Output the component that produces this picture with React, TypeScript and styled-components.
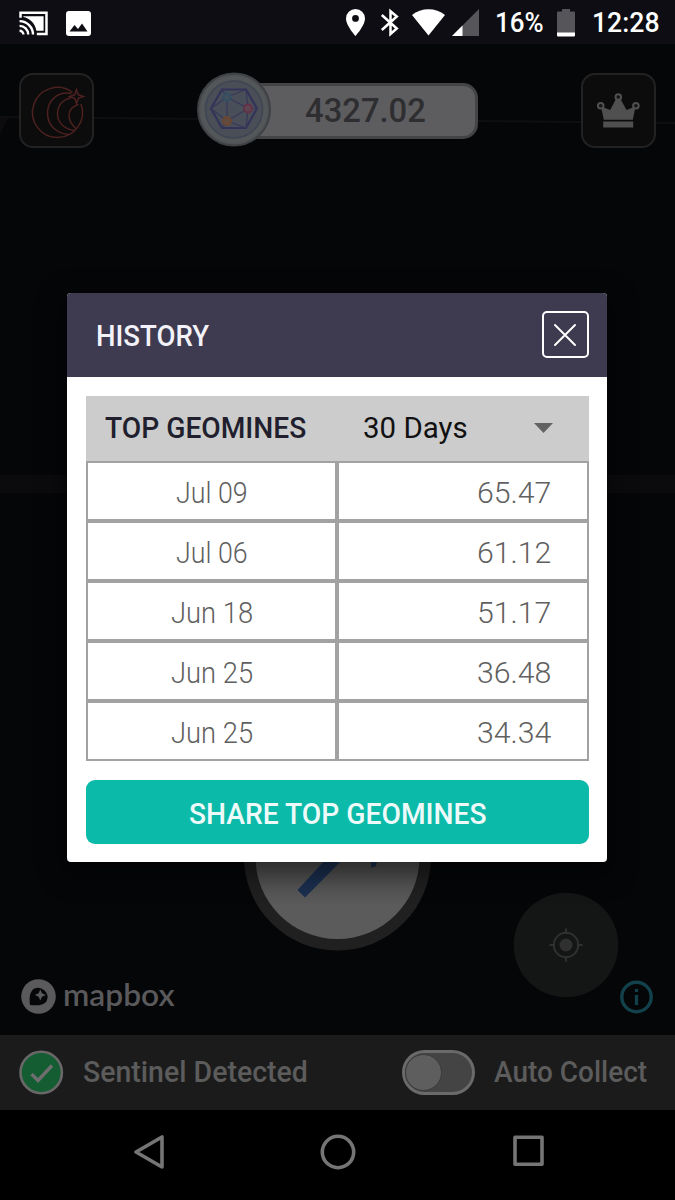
import React, { useLayoutEffect, useRef, useState } from "react";
import styled, { createGlobalStyle } from "styled-components";

const GlobalStyle = createGlobalStyle`
  * { box-sizing: border-box; }
  body { margin: 0; background: #000; font-family: Roboto, "Liberation Sans", sans-serif; }
  svg { display: block; flex: none; overflow: visible; }
`;

const Screen = styled.div`
  position: relative;
  width: 675px;
  height: 1200px;
  display: flex;
  flex-direction: column;
  overflow: hidden;
`;

/* ---------- text that is condensed to a set width ---------- */

const FitBox = styled.span<{ $width: number; $size: number; $weight: number; $color: string; $family?: string }>`
  display: block;
  flex: none;
  width: ${(p) => p.$width}px;
  font-family: ${(p) => p.$family ?? "Roboto"}, "Liberation Sans", sans-serif;
  font-size: ${(p) => p.$size}px;
  font-weight: ${(p) => p.$weight};
  line-height: 40px;
  height: 40px;
  color: ${(p) => p.$color};
  white-space: nowrap;
`;

const FitInner = styled.span`
  display: inline-block;
  transform-origin: left center;
`;

type LabelProps = {
  width: number;
  size: number;
  weight?: number;
  color: string;
  family?: string;
  children: string;
};

function Label({ width, size, weight = 400, color, family, children }: LabelProps) {
  const ref = useRef<HTMLSpanElement>(null);
  const [scale, setScale] = useState(1);
  useLayoutEffect(() => {
    if (ref.current) setScale(width / ref.current.offsetWidth);
  }, [width, children]);
  return (
    <FitBox $width={width} $size={size} $weight={weight} $color={color} $family={family}>
      <FitInner ref={ref} style={{ transform: `scaleX(${scale})` }}>
        {children}
      </FitInner>
    </FitBox>
  );
}

/* ---------- status bar ---------- */

const StatusBar = styled.header`
  height: 44px;
  flex: none;
  display: flex;
  justify-content: space-between;
  align-items: center;
  padding: 2px 15px 0 18px;
  background: #0d0d13;
`;

const StatusGroup = styled.div<{ $gap: number }>`
  display: flex;
  align-items: center;
  gap: ${(p) => p.$gap}px;
`;

const StatusIcons = styled.div`
  display: flex;
  align-items: center;
  margin: -2px -1px 0 0;
`;

/* ---------- map ---------- */

const MapArea = styled.main`
  position: relative;
  flex: 1;
  display: flex;
  flex-direction: column;
  justify-content: space-between;
  background: #050608;
`;

const MapDrawing = styled.svg`
  position: absolute;
  left: 0;
  top: 0;
`;

const TopControls = styled.div`
  position: relative;
  display: flex;
  justify-content: space-between;
  padding: 29px 19px 0 19px;
`;

const SquareButton = styled.button`
  width: 75px;
  height: 75px;
  padding: 0;
  display: flex;
  align-items: center;
  justify-content: center;
  border: 2px solid #222;
  border-radius: 14px;
  background: #0c0c0c;
`;

const Balance = styled.div`
  width: 281px;
  height: 75px;
  display: flex;
  align-items: center;
`;

const BalancePill = styled.div`
  width: 244px;
  height: 56px;
  margin: 0 0 0 -37px;
  padding: 1px 0 0 67px;
  display: flex;
  align-items: center;
  border: 3px solid #444446;
  border-radius: 15px;
  background: #5d5d60;
`;

const Coin = styled.svg`
  position: relative;
  z-index: 1;
`;

const MapFooter = styled.div`
  position: relative;
  display: flex;
  justify-content: space-between;
  align-items: center;
  padding: 0 22px 21px 21px;
`;

const Brand = styled.div`
  display: flex;
  align-items: center;
  gap: 7px;
`;

const BrandText = styled.div`
  margin-top: -6px;
`;

/* ---------- bottom bars ---------- */

const SentinelBar = styled.section`
  height: 75px;
  flex: none;
  display: flex;
  align-items: center;
  justify-content: space-between;
  padding: 0 28px 0 19px;
  background: #1b1b1b;
`;

const Item = styled.div`
  display: flex;
  align-items: center;
  gap: 19px;
`;

const ItemText = styled.div`
  margin-top: -2px;
`;

const Toggle = styled.div`
  width: 73px;
  height: 45px;
  padding: 1px 0;
  border: 3px solid #6a6a6a;
  border-radius: 23px;
  background: #444;
`;

const Knob = styled.div`
  width: 37px;
  height: 37px;
  border-radius: 50%;
  border: 1px solid #3a3a3a;
  background: #5e5e5e;
`;

const NavBar = styled.nav`
  height: 90px;
  flex: none;
  display: flex;
  align-items: center;
  justify-content: space-between;
  padding: 0 131px 6px 133px;
  background: #000;
`;

/* ---------- dialog ---------- */

const Dialog = styled.section`
  position: absolute;
  left: 67.4px;
  top: 292.5px;
  width: 540px;
  height: 569.9px;
  border-radius: 4px;
  overflow: hidden;
  background: #fff;
  box-shadow: 0 8px 26px 6px rgba(0, 0, 0, 0.45);
`;

const DialogHeader = styled.div`
  height: 84.5px;
  display: flex;
  align-items: center;
  justify-content: space-between;
  padding: 0 18.5px 0 29px;
  background: #3e3a50;
`;

const DialogTitle = styled.div`
  padding-top: 2px;
`;

const CloseButton = styled.button`
  width: 47px;
  height: 47px;
  padding: 0;
  display: flex;
  align-items: center;
  justify-content: center;
  border: 2px solid #fff;
  border-radius: 5px;
  background: transparent;
`;

const DialogBody = styled.div`
  padding: 19px 18.5px 18px 18.5px;
`;

const TableHeader = styled.div`
  height: 65px;
  display: flex;
  align-items: center;
  padding: 0 36px 1px 19px;
  background: #ccc;
`;

const PeriodSelect = styled.div`
  flex: 1;
  display: flex;
  align-items: center;
  justify-content: space-between;
  margin-left: 57px;
`;

const Row = styled.div`
  height: 60px;
  display: grid;
  grid-template-columns: 1fr 1fr;
`;

const Cell = styled.div<{ $end?: boolean }>`
  display: flex;
  align-items: center;
  justify-content: ${(p) => (p.$end ? "flex-end" : "center")};
  padding-right: ${(p) => (p.$end ? 36 : 0)}px;
  padding-top: 4px;
  border: 2px solid #a2a2a2;
`;

const ShareButton = styled.button`
  width: 100%;
  height: 64px;
  margin-top: 19px;
  padding: 3px 0 0 1px;
  display: flex;
  align-items: center;
  justify-content: center;
  border: 0;
  border-radius: 9px;
  background: #0bbaa8;
`;

const rows = [
  { date: "Jul 09", width: 72, amount: "65.47" },
  { date: "Jul 06", width: 72, amount: "61.12" },
  { date: "Jun 18", width: 82, amount: "51.17" },
  { date: "Jun 25", width: 82, amount: "36.48" },
  { date: "Jun 25", width: 82, amount: "34.34" },
];

export default function App() {
  return (
    <Screen>
      <GlobalStyle />
      <StatusBar>
        <StatusGroup $gap={17}>
          <svg width="31" height="25" viewBox="0 0 31 26" fill="none" stroke="#fff">
            <path d="M2 7V1.8H29V24H19" strokeWidth="2.6" />
            <path d="M5 5.5H26V20.5H18.5C17 12 11 7.5 5 6.3Z" fill="#fff" stroke="none" />
            <path d="M1 20.5A4 4 0 0 1 5 24.5M1 15.5A9 9 0 0 1 10 24.5M1 10.5A14 14 0 0 1 15 24.5" strokeWidth="2.5" />
          </svg>
          <svg width="25" height="25" viewBox="0 0 25 25">
            <rect width="25" height="25" rx="3" fill="#fff" />
            <path d="M3.5 20.5L8.5 14L12 18L16 12.5L21.5 20.5Z" fill="#0d0d13" />
          </svg>
        </StatusGroup>
        <StatusGroup $gap={17}>
          <StatusIcons>
            <svg width="35" height="27" viewBox="0 0 35 27">
              <path d="M9.5 0A9.5 9.5 0 0 0 0 9.5C0 16.5 9.5 27 9.5 27S19 16.5 19 9.5A9.5 9.5 0 0 0 9.5 0ZM9.5 6A3.4 3.4 0 1 1 9.5 12.8A3.4 3.4 0 0 1 9.5 6Z" fill="#fff" />
            </svg>
            <svg width="31" height="27" viewBox="0 0 31 27" fill="none" stroke="#fff" strokeWidth="2.5">
              <path d="M0.8 6L15.8 19.5L9.5 25V2.2L15.8 7.5L0.8 21" />
            </svg>
            <svg width="40" height="27" viewBox="0 0 40 27">
              <path d="M0 6C9-1.8 24-1.8 33 6L16.5 26.5Z" fill="#fff" />
            </svg>
            <svg width="27" height="27" viewBox="0 0 27 27">
              <path d="M0 27L27 0V27Z" fill="#55555a" />
              <path d="M0 27L10.5 16.5V27Z" fill="#fff" />
            </svg>
          </StatusIcons>
          <StatusGroup $gap={13}>
            <Label width={49} size={27} weight={500} color="#fff">16%</Label>
            <svg width="18" height="28" viewBox="0 0 18 28">
              <path d="M0 3.5Q0 2.5 1 2.5H5V0H13V2.5H17Q18 2.5 18 3.5V24H0Z" fill="#55555a" />
              <path d="M0 23.5H18V26.5Q18 27.5 17 27.5H1Q0 27.5 0 26.5Z" fill="#fff" />
            </svg>
          </StatusGroup>
          <Label width={68} size={27} weight={500} color="#fff">12:28</Label>
        </StatusGroup>
      </StatusBar>

      <MapArea>
        <MapDrawing width="675" height="991" viewBox="0 44 675 991">
          <defs>
            <linearGradient id="puck" x1="0" y1="0" x2="0" y2="1">
              <stop offset="0.5" stopColor="#4c4c4c" />
              <stop offset="0.8" stopColor="#5b5b5b" />
            </linearGradient>
          </defs>
          <path d="M0 475H675V493H0Z" fill="#0b0b0e" />
          <path d="M0 116H9L0 135Z" fill="#0c0c0f" />
          <path d="M0 117L200 119L478 121L675 123" stroke="#0f0f12" strokeWidth="2" fill="none" />
          <circle cx="337.5" cy="857" r="93.5" fill="#202020" />
          <circle cx="337.5" cy="857" r="82" fill="url(#puck)" />
          <path d="M297.5 890L338 846L346 856L305 897.5Z" fill="#1b2f4f" />
          <path d="M370 855L378 855L376 866L371.5 868Z" fill="#1b2f4f" />
          <circle cx="566" cy="945" r="52.3" fill="#141615" />
          <g fill="none" stroke="#303030" strokeWidth="2">
            <circle cx="566" cy="945" r="12.2" />
            <path d="M566 928.5V934M566 956V961.5M549.5 945H555M577 945H582.5" />
          </g>
          <circle cx="566" cy="945" r="6.5" fill="#303030" />
        </MapDrawing>

        <TopControls>
          <SquareButton>
            <svg width="56" height="56" viewBox="0 0 56 56" fill="none" stroke="#4c2120" strokeWidth="1.5">
              <path d="M43.500 9.500A25 25 0 1 0 52 21" />
              <path d="M42.500 10.500C28 8 18.500 18 18.500 30C18.500 43 28 50.500 40 51.500" />
              <path d="M42 15C33 16.500 28.500 23 28.500 31C28.500 40 36 46.500 46 47.500" />
              <path d="M49.500 21.500C37.500 25 37 37 47.500 46" />
              <path d="M47.500 6.500L49.300 11.800L54.500 13.500L49.300 15.300L47.500 20.500L45.700 15.300L40.500 13.500L45.700 11.800Z" />
            </svg>
          </SquareButton>
          <Balance>
            <Coin width="75" height="75" viewBox="0 0 75 75">
              <circle cx="37" cy="36.5" r="36" fill="#4f5255" stroke="#3f4144" strokeWidth="2" />
              <circle cx="37" cy="36.5" r="31.5" fill="none" stroke="#54575a" strokeWidth="4" />
              <circle cx="37" cy="36.5" r="28.5" fill="#4a4f57" stroke="#3f4553" strokeWidth="1.5" />
              <path d="M25 16.5H49L60 35.5L49 55H25L14 35.5Z" fill="#494f59" stroke="#33335a" strokeWidth="2.2" />
              <path d="M30 24L51 35.5L30 48ZM25 16.5L30 24L49 16.5L51 35.5M14 35.5L30 24M14 35.5L30 48L49 55L51 35.5L60 35.5M25 55L30 48" fill="none" stroke="#37385a" strokeWidth="1.2" />
              <circle cx="30" cy="24" r="3.5" fill="#43505c" stroke="#305066" strokeWidth="1.8" />
              <circle cx="51" cy="35.5" r="4" fill="#5f4552" stroke="#652f46" strokeWidth="1.8" />
              <circle cx="30" cy="48" r="4" fill="#634b40" stroke="#6b4632" strokeWidth="1.8" />
            </Coin>
            <BalancePill>
              <Label width={121} size={32.5} weight={500} color="#2e2e31">4327.02</Label>
            </BalancePill>
          </Balance>
          <SquareButton>
            <svg width="43" height="35" viewBox="0 0 43 35">
              <path d="M4 13.5L13.2 17L19.5 5H23L29.5 17L38.5 13.5L35.8 26.8H6.8ZM6.2 28.4H36.2V34.4H6.2Z" fill="#505050" />
              <g fill="#151515" stroke="#505050" strokeWidth="2">
                <circle cx="21.3" cy="4" r="2.8" />
                <circle cx="3.7" cy="12.7" r="2.8" />
                <circle cx="38.9" cy="12.7" r="2.8" />
              </g>
            </svg>
          </SquareButton>
        </TopControls>

        <MapFooter>
          <Brand>
            <svg width="35" height="35" viewBox="0 0 35 35">
              <circle cx="17.5" cy="17.5" r="17.3" fill="#5a595c" />
              <path d="M9 26C8 18 9 13 12.5 10A9.5 9.5 0 0 1 25.5 22.5C22 26 17 27 9 26Z" fill="#060709" />
              <path d="M19.3 10.5L21 14.3L24.8 16L21 17.7L19.3 21.5L17.6 17.7L13.8 16L17.6 14.3Z" fill="#5a595c" />
            </svg>
            <BrandText>
              <Label width={112} size={30} weight={600} color="#5a595c" family="Lato">mapbox</Label>
            </BrandText>
          </Brand>
          <svg width="33" height="34" viewBox="0 0 33 34">
            <circle cx="16.5" cy="17" r="14.7" fill="none" stroke="#12414c" strokeWidth="3.4" />
            <path d="M14.9 9H18.1V12H14.9ZM14.9 15H18.1V25H14.9Z" fill="#12414c" />
          </svg>
        </MapFooter>
      </MapArea>

      <SentinelBar>
        <Item>
          <svg width="45" height="45" viewBox="0 0 45 45">
            <circle cx="22.2" cy="22.5" r="20.7" fill="#145c31" stroke="#686868" strokeWidth="2.6" />
            <path d="M12.5 24L19 30.5L33 15.5" fill="none" stroke="#6e6e6e" strokeWidth="3.4" />
          </svg>
          <ItemText>
            <Label width={225} size={30} weight={500} color="#5c5c5c">Sentinel Detected</Label>
          </ItemText>
        </Item>
        <Item>
          <Toggle><Knob /></Toggle>
          <ItemText>
            <Label width={153} size={30} weight={500} color="#5c5c5c">Auto Collect</Label>
          </ItemText>
        </Item>
      </SentinelBar>

      <NavBar>
        <svg width="32" height="36" viewBox="0 0 32 36" fill="none" stroke="#757575" strokeWidth="3.6" strokeLinejoin="round">
          <path d="M3 18L29 3V33Z" />
        </svg>
        <svg width="36" height="36" viewBox="0 0 36 36" fill="none" stroke="#757575" strokeWidth="3.6">
          <circle cx="17" cy="18" r="15.7" />
        </svg>
        <svg width="32" height="36" viewBox="0 0 32 36" fill="none" stroke="#757575" strokeWidth="3.6" strokeLinejoin="round">
          <rect x="3" y="3.3" width="27" height="27" />
        </svg>
      </NavBar>

      <Dialog>
        <DialogHeader>
          <DialogTitle>
            <Label width={113} size={30} weight={500} color="#f2f2f8">HISTORY</Label>
          </DialogTitle>
          <CloseButton>
            <svg width="22" height="22" viewBox="0 0 22 22" stroke="#fff" strokeWidth="2" strokeLinecap="round">
              <path d="M1 1L21 21M21 1L1 21" />
            </svg>
          </CloseButton>
        </DialogHeader>
        <DialogBody>
          <TableHeader>
            <Label width={201} size={30} weight={500} color="#211f2e">TOP GEOMINES</Label>
            <PeriodSelect>
              <Label width={105} size={30} color="#111">30 Days</Label>
              <svg width="19" height="10" viewBox="0 0 19 10"><path d="M0 0H19L9.5 10Z" fill="#626262" /></svg>
            </PeriodSelect>
          </TableHeader>
          {rows.map((r, i) => (
            <Row key={i}>
              <Cell><Label width={r.width} size={29} weight={300} color="#606060">{r.date}</Label></Cell>
              <Cell $end><Label width={74} size={29} weight={300} color="#606060">{r.amount}</Label></Cell>
            </Row>
          ))}
          <ShareButton>
            <Label width={298} size={30} weight={500} color="#eefafa">SHARE TOP GEOMINES</Label>
          </ShareButton>
        </DialogBody>
      </Dialog>
    </Screen>
  );
}
